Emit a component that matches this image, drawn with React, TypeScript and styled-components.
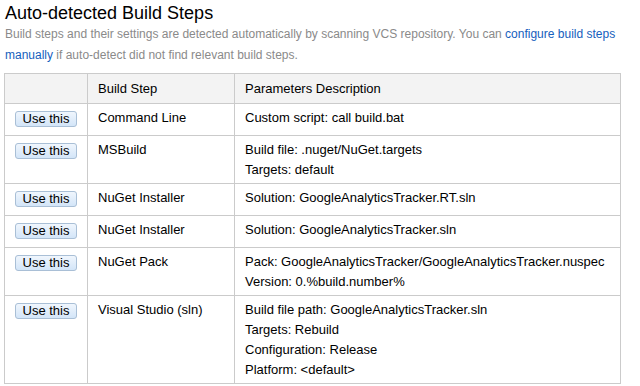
import React from "react";
import styled, { createGlobalStyle } from "styled-components";

const Global = createGlobalStyle`
  html, body { margin: 0; padding: 0; background: #fff; }
  body { font-family: "Liberation Sans", Arial, sans-serif; color: #000; }
`;

const Page = styled.div`
  padding: 2px 4px 0 4px;
`;

const Title = styled.h2`
  margin: 0 0 0 1px;
  font-size: 18px;
  font-weight: normal;
  line-height: 22px;
  color: #000;
`;

const Intro = styled.p`
  margin: 0 0 7px 1px;
  font-size: 12px;
  line-height: 21px;
  color: #8a8a8a;
`;

const Link = styled.a`
  color: #1560bd;
  text-decoration: none;
`;

const Table = styled.table`
  border-collapse: collapse;
  width: 617px;
  font-size: 13px;
  line-height: 20px;
`;

const Th = styled.th<{ $w?: number }>`
  border: 1px solid #cbcbcb;
  background: #f3f3f3;
  text-align: left;
  font-weight: normal;
  padding: 5px 10px 4px 10px;
  width: ${(p) => (p.$w ? `${p.$w}px` : "auto")};
`;

const Td = styled.td<{ $last?: boolean }>`
  border: 1px solid #cbcbcb;
  vertical-align: top;
  padding: 4px 10px 3px 10px;
`;

const ButtonCell = styled(Td)`
  padding-right: 0;
`;

const UseButton = styled.button`
  display: block;
  box-sizing: border-box;
  width: 62px;
  height: 16px;
  margin: 3px 0 5px 0;
  padding: 0;
  font-family: "Liberation Sans", Arial, sans-serif;
  font-size: 13px;
  line-height: 14px;
  color: #000;
  border: 1px solid #a9bfd6;
  border-radius: 3px;
  background: linear-gradient(#f0f6fd, #d3e5f8);
  cursor: pointer;
`;

const Line = styled.div``;

const steps: { name: string; params: string[] }[] = [
  { name: "Command Line", params: ["Custom script: call build.bat"] },
  { name: "MSBuild", params: ["Build file: .nuget/NuGet.targets", "Targets: default"] },
  { name: "NuGet Installer", params: ["Solution: GoogleAnalyticsTracker.RT.sln"] },
  { name: "NuGet Installer", params: ["Solution: GoogleAnalyticsTracker.sln"] },
  {
    name: "NuGet Pack",
    params: ["Pack: GoogleAnalyticsTracker/GoogleAnalyticsTracker.nuspec", "Version: 0.%build.number%"],
  },
  {
    name: "Visual Studio (sln)",
    params: [
      "Build file path: GoogleAnalyticsTracker.sln",
      "Targets: Rebuild",
      "Configuration: Release",
      "Platform: <default>",
    ],
  },
];

export default function App() {
  return (
    <Page>
      <Global />
      <Title>Auto-detected Build Steps</Title>
      <Intro>
        Build steps and their settings are detected automatically by scanning VCS repository. You can{" "}
        <Link href="#">configure build steps manually</Link> if auto-detect did not find relevant build steps.
      </Intro>
      <Table>
        <thead>
          <tr>
            <Th $w={62} />
            <Th $w={126}>Build Step</Th>
            <Th>Parameters Description</Th>
          </tr>
        </thead>
        <tbody>
          {steps.map((s, i) => (
            <tr key={i}>
              <ButtonCell>
                <UseButton>Use this</UseButton>
              </ButtonCell>
              <Td>{s.name}</Td>
              <Td>
                {s.params.map((p, j) => (
                  <Line key={j}>{p}</Line>
                ))}
              </Td>
            </tr>
          ))}
        </tbody>
      </Table>
    </Page>
  );
}
